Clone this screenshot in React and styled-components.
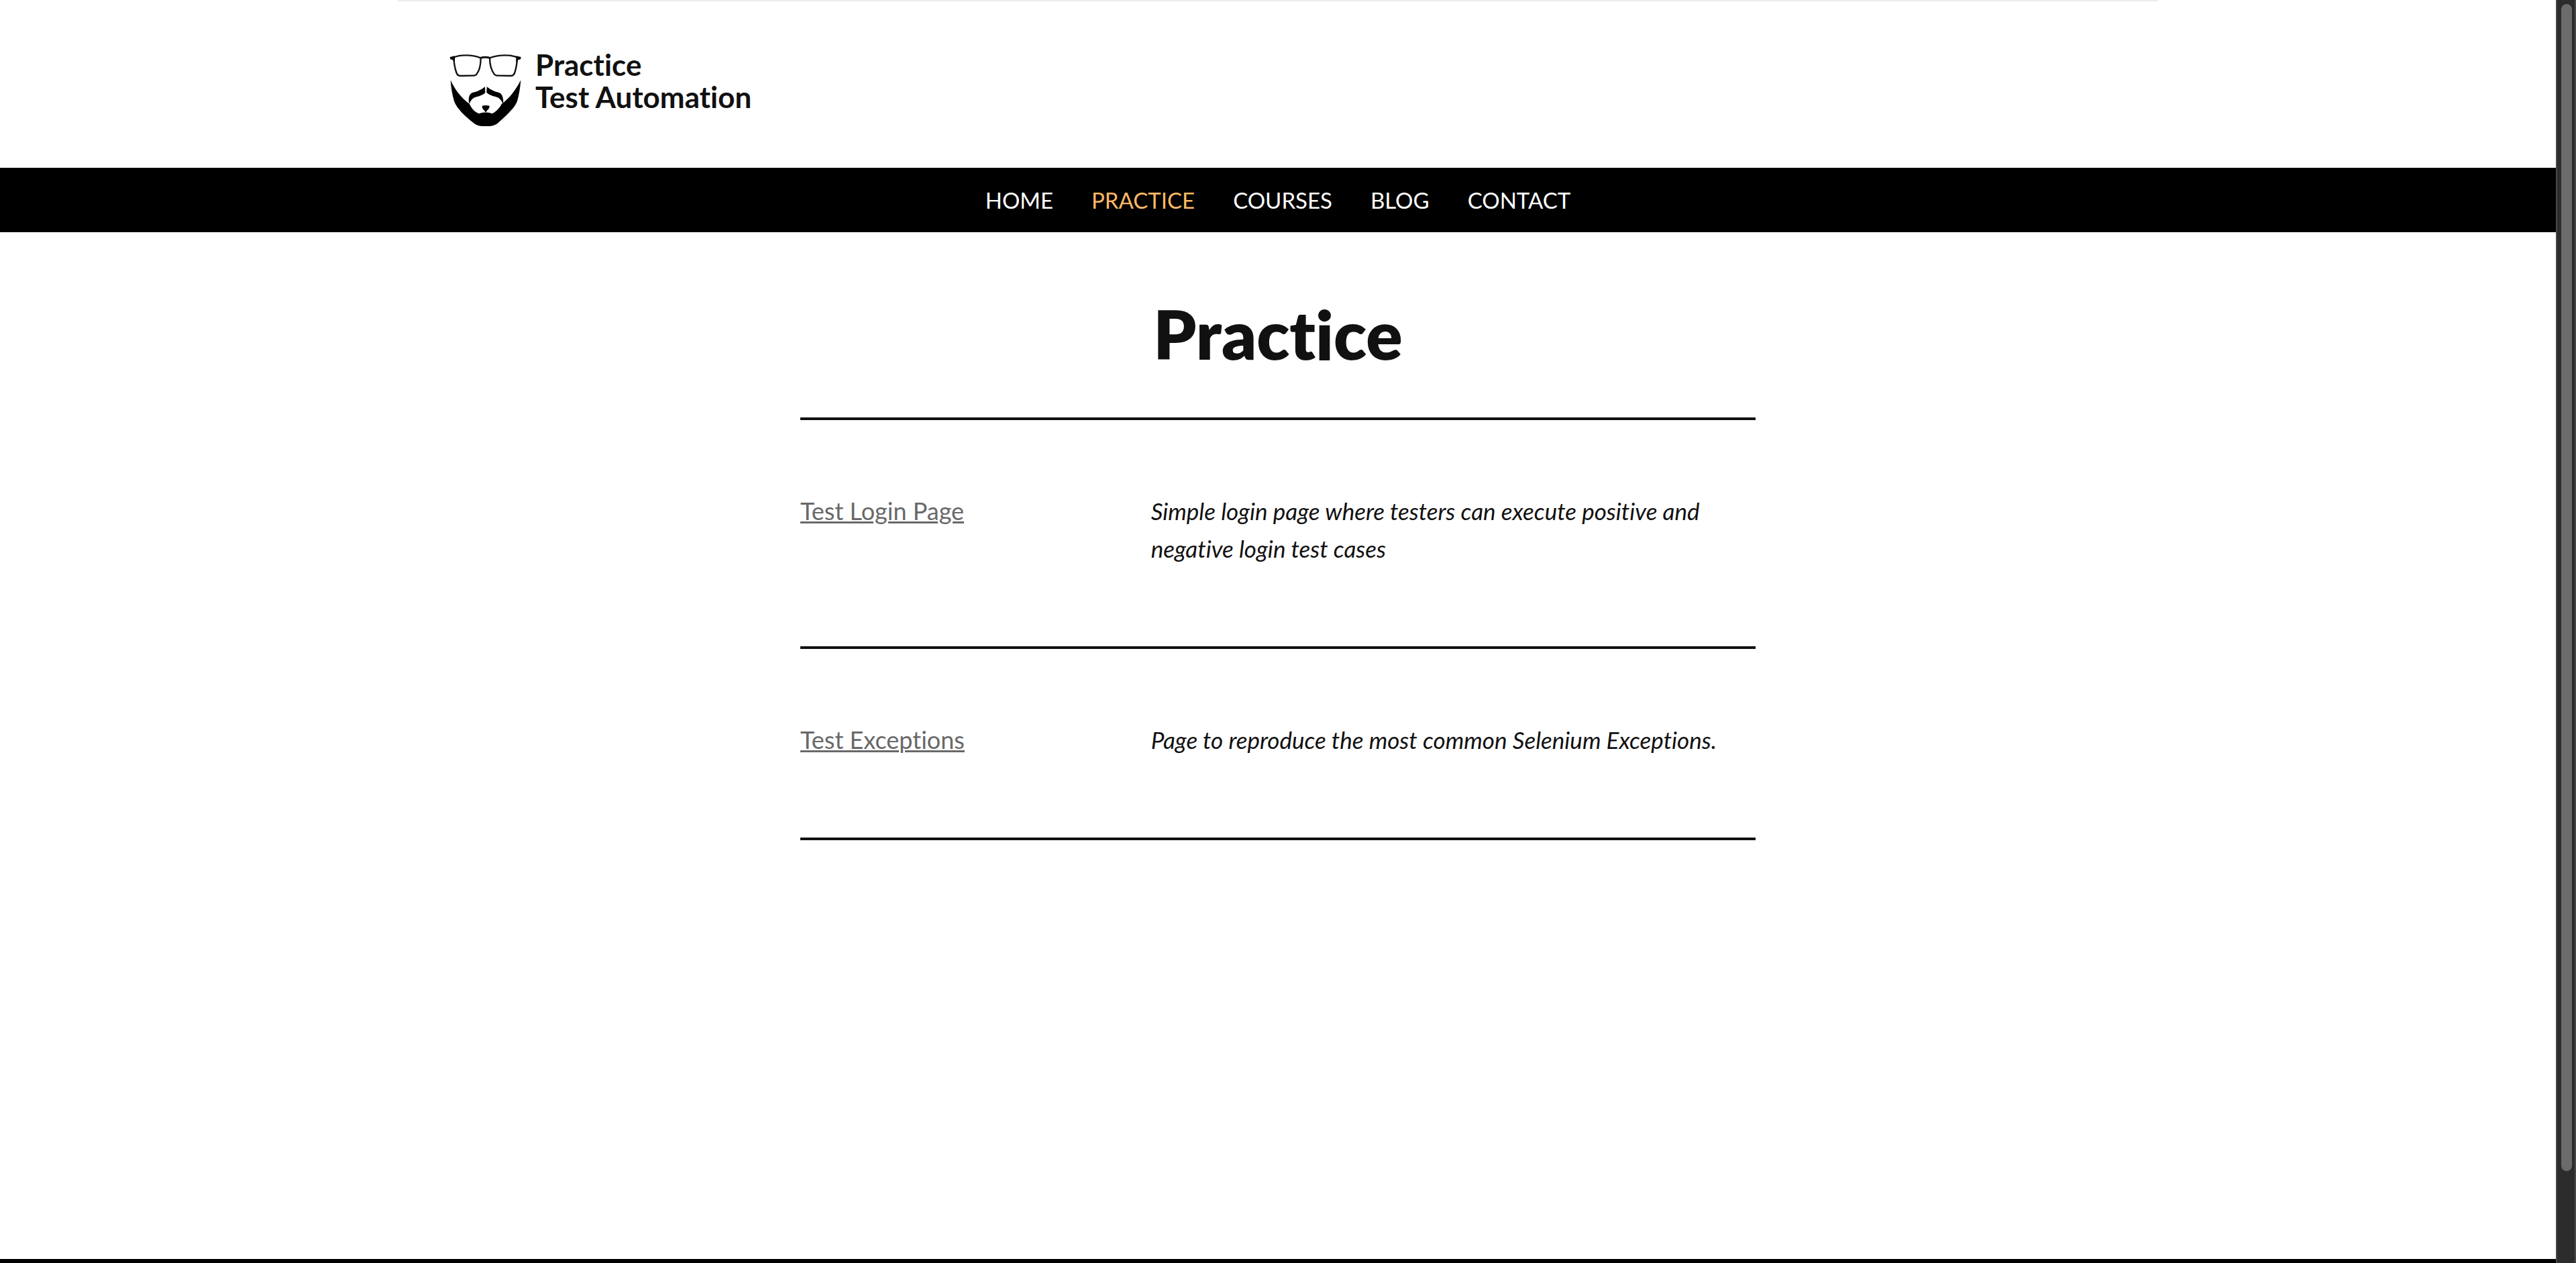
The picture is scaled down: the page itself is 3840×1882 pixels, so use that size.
import React from 'react';
import styled, { createGlobalStyle } from 'styled-components';

const GlobalStyle = createGlobalStyle`
  *, *::before, *::after { box-sizing: border-box; }
  body {
    margin: 0;
    background: #fff;
    color: #111;
    font-family: Lato, "Open Sans", sans-serif;
    font-size: 36px;
    line-height: 56px;
    font-variant-ligatures: none;
  }
`;

const Screen = styled.div`
  display: flex;
  height: 100vh;
  overflow: hidden;
`;

const Page = styled.div`
  flex: 1;
  min-width: 0;
  display: flex;
  flex-direction: column;
`;

const Header = styled.header`
  width: 100%;
  max-width: 2624px;
  margin: 0 auto;
  padding: 70px 77px 61px;
  border-top: 2px solid #ebebeb;
`;

const Brand = styled.a`
  display: flex;
  width: fit-content;
  align-items: flex-start;
  gap: 20px;
  color: #111;
  text-decoration: none;
  font-size: 44px;
  font-weight: 700;
  line-height: 48px;
`;

const BrandMark = styled.svg`
  display: block;
  width: 108px;
  height: 110px;
  margin-top: 7px;
`;

const Nav = styled.nav`
  background: #000;
`;

const Menu = styled.ul`
  display: flex;
  justify-content: center;
  gap: 57px;
  margin: 0;
  padding: 24px 0;
  list-style: none;
  font-size: 33px;
  line-height: 48px;
  text-transform: uppercase;
`;

const MenuLink = styled.a`
  display: block;
  color: ${({ $active }) => ($active ? '#ffb866' : '#fff')};
  text-decoration: none;
`;

const Main = styled.main`
  flex: 1;
  width: 100%;
  max-width: 1424px;
  margin: 0 auto;
`;

const Title = styled.h1`
  margin: 0;
  padding: 87px 0 61px;
  font-size: 101px;
  font-weight: 800;
  line-height: 128px;
  text-align: center;
`;

const Entry = styled.section`
  display: grid;
  grid-template-columns: 1fr 2fr;
  gap: 72px;
  padding: 107px 0 118px;
  border-top: 4px solid #111;

  &:last-child { border-bottom: 4px solid #111; }
`;

const EntryLink = styled.a`
  color: #696969;
  text-decoration: underline;
  text-decoration-thickness: 3px;
`;

const EntryText = styled.p`
  margin: 0;
  font-size: 35px;
  font-style: italic;
`;

const Footer = styled.footer`
  height: 6px;
  background: #000;
`;

const ScrollTrack = styled.div`
  flex: none;
  width: 30px;
  padding: 6px;
  background: #2c2c2c;
  border: solid #484848;
  border-width: 0 2px;
`;

const ScrollThumb = styled.div`
  width: 16px;
  height: 93%;
  border-radius: 8px;
  background: #6b6b6b;
`;

const menu = ['Home', 'Practice', 'Courses', 'Blog', 'Contact'];

const entries = [
  {
    name: 'Test Login Page',
    text: 'Simple login page where testers can execute positive and negative login test cases',
  },
  {
    name: 'Test Exceptions',
    text: 'Page to reproduce the most common Selenium Exceptions.',
  },
];

function Logo() {
  return (
    <BrandMark viewBox="60 57 324 330" aria-hidden="true">
      <g fill="none" stroke="#111" strokeWidth="7" strokeLinejoin="round">
        <path d="M79 77 C105 64 160 63 200 79 C200 108 197 132 182 151 Q177 158 166 158 L109 159 Q96 158 92 147 C85 128 80 101 79 77 Z" />
        <path d="M364 77 C338 64 283 63 240 79 C240 108 246 132 260 151 Q265 158 277 158 L334 159 Q347 158 351 147 C358 128 362 101 364 77 Z" />
        <path d="M198 79 Q220 73 242 79" strokeWidth="9" />
      </g>
      <path d="M62 75 L84 70 L84 98 L75 88 L64 85 Z M380 75 L358 70 L358 98 L367 88 L378 85 Z" />
      <path d="M65 178 C80 213 108 255 150 285 C158 305 175 322 193 328 Q208 321 222 323 Q236 321 250 328 C269 320 285 302 293 285 C330 258 358 220 379 178 C376 215 371 246 363 272 C352 304 310 340 277 370 Q262 383 240 384 L204 384 Q183 383 168 370 C130 339 93 306 81 272 C73 246 67 215 65 178 Z" />
      <path d="M219 208 L220 235 C207 248 183 252 169 257 C159 263 154 272 149 284 C143 263 147 240 163 234 C188 229 205 219 219 208 Z" />
      <path d="M227 208 L226 233 C240 248 263 250 277 256 C288 263 293 272 300 285 C303 264 298 240 282 234 C258 229 242 219 227 208 Z" />
      <path d="M206 293 Q222 289 239 293 Q240 304 229 313 L222 323 L215 313 Q205 304 206 293 Z" />
    </BrandMark>
  );
}

export default function App() {
  return (
    <>
      <GlobalStyle />
      <Screen>
        <Page>
          <Header>
            <Brand href="#home">
              <Logo />
              <span>
                Practice
                <br />
                Test Automation
              </span>
            </Brand>
          </Header>
          <Nav>
            <Menu>
              {menu.map((item) => (
                <li key={item}>
                  <MenuLink href={`#${item.toLowerCase()}`} $active={item === 'Practice'}>
                    {item}
                  </MenuLink>
                </li>
              ))}
            </Menu>
          </Nav>
          <Main>
            <Title>Practice</Title>
            {entries.map(({ name, text }) => (
              <Entry key={name}>
                <div>
                  <EntryLink href={`#${name.toLowerCase().replaceAll(' ', '-')}`}>{name}</EntryLink>
                </div>
                <EntryText>{text}</EntryText>
              </Entry>
            ))}
          </Main>
          <Footer />
        </Page>
        <ScrollTrack>
          <ScrollThumb />
        </ScrollTrack>
      </Screen>
    </>
  );
}
